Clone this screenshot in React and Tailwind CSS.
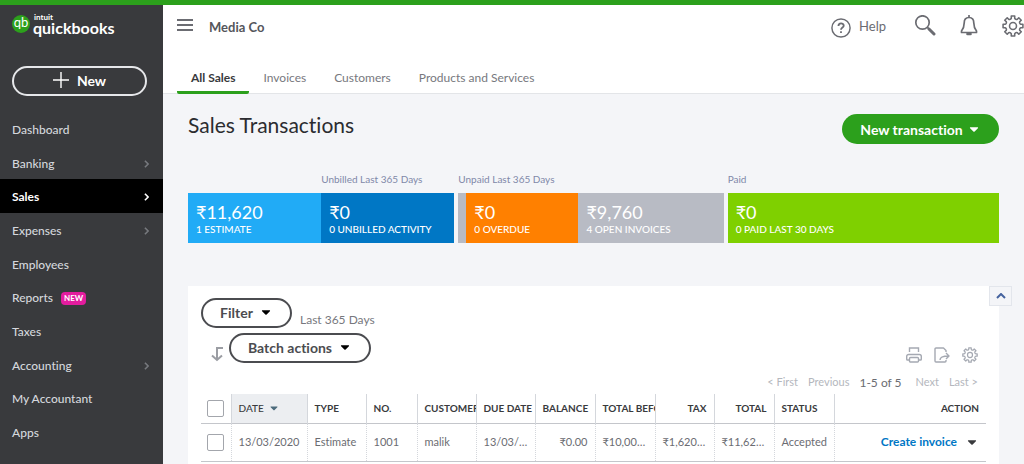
import { useState } from 'react';
import { FaCaretDown } from 'react-icons/fa';

const menuItems = [
  { name: 'Dashboard' },
  { name: 'Banking', arrow: true },
  { name: 'Sales', arrow: true },
  { name: 'Expenses', arrow: true },
  { name: 'Employees' },
  { name: 'Reports', badge: 'NEW' },
  { name: 'Taxes' },
  { name: 'Accounting', arrow: true },
  { name: 'My Accountant' },
  { name: 'Apps' },
];

const tabs = ['All Sales', 'Invoices', 'Customers', 'Products and Services'];

const moneyBar = [
  {
    width: 'flex-[266]',
    parts: [
      { amount: '₹11,620', label: '1 ESTIMATE', style: 'flex-1 bg-[#21abf6]' },
      { title: 'Unbilled Last 365 Days', amount: '₹0', label: '0 UNBILLED ACTIVITY', style: 'flex-1 bg-[#0077c5]' },
    ],
  },
  {
    width: 'flex-[265]',
    title: 'Unpaid Last 365 Days',
    parts: [
      { amount: '₹0', label: '0 OVERDUE', style: 'flex-[96] border-l-8 border-[#b8bbc4] bg-[#ff8000]' },
      { amount: '₹9,760', label: '4 OPEN INVOICES', style: 'flex-[129] bg-[#b8bbc4]' },
    ],
  },
  {
    width: 'flex-[271]',
    title: 'Paid',
    parts: [{ amount: '₹0', label: '0 PAID LAST 30 DAYS', style: 'flex-1 bg-[#7fd000]' }],
  },
];

const columns = [
  { name: 'TYPE', value: 'Estimate', width: 'w-[59px]' },
  { name: 'NO.', value: '1001', width: 'w-[51px]' },
  { name: 'CUSTOMER', value: 'malik', width: 'w-[59px]' },
  { name: 'DUE DATE', value: '13/03/2020', width: 'w-[59px]' },
  { name: 'BALANCE', value: '₹0.00', width: 'w-[60px]', right: true },
  { name: 'TOTAL BEFORE TAX', value: '₹10,000.00', width: 'w-[60px]' },
  { name: 'TAX', value: '₹1,620.00', width: 'w-[59px]', right: true },
  { name: 'TOTAL', value: '₹11,620.00', width: 'w-[60px]', right: true },
  { name: 'STATUS', value: 'Accepted', width: 'w-[60px]' },
];

function Chevron({ className }) {
  return (
    <svg viewBox="0 0 6 10" className={`h-2 w-[5px] ${className}`} fill="none" stroke="currentColor" strokeWidth="2">
      <path d="M1 1l4 4-4 4" />
    </svg>
  );
}

function Gear({ className, strokeWidth }) {
  const teeth = [0, 45, 90, 135, 180, 225, 270, 315];
  // one tooth and the notch next to it, for each eighth of the wheel
  const point = (radius, angle) => {
    const rad = (angle * Math.PI) / 180;
    return `${(12 + radius * Math.cos(rad)).toFixed(2)} ${(12 + radius * Math.sin(rad)).toFixed(2)}`;
  };
  const d = teeth
    .map((a, i) => `${i ? 'L' : 'M'}${point(11, a - 10)}L${point(11, a + 10)}L${point(8.8, a + 12)}A2.2 2.2 0 0 0 ${point(8.8, a + 33)}`)
    .join('');
  return (
    <svg viewBox="0 0 24 24" className={className} fill="none" stroke="currentColor" strokeWidth={strokeWidth} strokeLinejoin="round">
      <path d={`${d}Z`} />
      <circle cx="12" cy="12" r="3.8" />
    </svg>
  );
}

function Sidebar() {
  const [active, setActive] = useState('Sales');

  return (
    <aside className="w-[163px] shrink-0 bg-[#393a3d] text-[#d4d7dc]">
      <a href="#home" className="flex h-[38px] items-center gap-[3px] pl-3 text-white">
        <span className="flex h-[18px] w-[18px] justify-center rounded-full bg-[#2ca01c] text-[13px] leading-[15px]">qb</span>
        <span className="flex flex-col">
          <span className="pl-px text-[8px] leading-[7px] font-bold">intuit</span>
          <span className="text-[16px] leading-[13px] font-bold">quickbooks</span>
        </span>
      </a>
      <button className="mt-[23px] ml-3 flex h-[30px] w-[135px] items-center justify-center gap-2 rounded-full border-2 border-[#e6e7ea] pb-0.5 text-[14px] font-bold text-white">
        <svg viewBox="0 0 16 16" className="h-4 w-4" fill="none" stroke="currentColor" strokeWidth="1.4">
          <path d="M8 0v16M0 8h16" />
        </svg>
        New
      </button>
      <nav className="mt-4 grid h-[337px] auto-rows-fr">
        {menuItems.map((item) => (
          <a
            key={item.name}
            href={`#${item.name}`}
            onClick={() => setActive(item.name)}
            className={`flex items-center pt-0.5 pr-[14px] pl-3 text-[12px] ${
              active === item.name ? 'bg-black font-bold text-white' : 'font-medium'
            }`}
          >
            {item.name}
            {item.badge && (
              <span className="ml-2 rounded-sm bg-[#e31c9e] px-[3px] text-[8px] leading-[13px] font-bold text-white">{item.badge}</span>
            )}
            {item.arrow && <Chevron className={`ml-auto ${active === item.name ? '' : 'text-[#77797e]'}`} />}
          </a>
        ))}
      </nav>
    </aside>
  );
}

function Header() {
  const [activeTab, setActiveTab] = useState('All Sales');

  return (
    <header className="bg-white">
      <div className="flex h-[57px] items-start pl-[14px] text-[#6b6c72]">
        <button aria-label="Menu" className="mt-[14px]">
          <svg viewBox="0 0 16 12" className="h-3 w-4" stroke="currentColor" strokeWidth="2">
            <path d="M0 1h16M0 6h16M0 11h16" />
          </svg>
        </button>
        <span className="mt-3 ml-4 text-[13px] leading-5 font-bold text-[#55565b]">Media Co</span>
        <div className="ml-auto flex items-center pt-[9px]">
          <button className="flex items-center gap-2 pt-0.5 text-[13px]">
            <svg viewBox="0 0 22 22" className="mt-0.5 h-5 w-5" fill="none" stroke="currentColor" strokeWidth="1.6">
              <circle cx="11" cy="11" r="10" />
              <path d="M8.2 8.8c0-3.8 5.8-3.6 5.8-.3 0 2-3 2-3 4.4" strokeWidth="2" />
              <path d="M11 14.6v2" strokeWidth="2" />
            </svg>
            Help
          </button>
          <button aria-label="Search" className="ml-7">
            <svg viewBox="0 0 22 22" className="h-[22px] w-[22px]" fill="none" stroke="currentColor">
              <circle cx="8.5" cy="7.5" r="6.7" strokeWidth="1.7" />
              <path d="M13.2 12.2l1.500 1.500" strokeWidth="1.700" />
              <path d="M15 14l5 5" strokeWidth="3" strokeLinecap="round" />
            </svg>
          </button>
          <button aria-label="Notifications" className="ml-6">
            <svg viewBox="0 0 18 22" className="h-[22px] w-[18px]" fill="none" stroke="currentColor" strokeWidth="1.7" strokeLinejoin="round">
              <path d="M9 2.500C5.500 2.500 4.200 5 4.200 8c0 4-.7 5.500-2.700 8v1.500h15V16c-2-2.500-2.700-4-2.700-8 0-3-1.300-5.500-4.800-5.500z" />
              <path d="M9 0v2.500" />
              <path d="M7.500 19h3" strokeWidth="2.600" strokeLinecap="round" />
            </svg>
          </button>
          <button aria-label="Settings" className="ml-6">
            <Gear className="h-[22px] w-[22px]" strokeWidth="1.7" />
          </button>
        </div>
      </div>
      <nav className="flex border-b border-[#e3e5e8] pl-[14px]" role="tablist">
        {tabs.map((tab) => (
          <button
            key={tab}
            role="tab"
            aria-selected={activeTab === tab}
            onClick={() => setActiveTab(tab)}
            className={`-mb-px h-8 rounded-xs border-b-3 px-[14px] pt-0.5 text-[12px] ${
              activeTab === tab ? 'border-[#2ca01c] font-bold text-[#393a3d]' : 'border-transparent text-[#77787e]'
            }`}
          >
            {tab}
          </button>
        ))}
      </nav>
    </header>
  );
}

function MoneyBar() {
  return (
    <div className="mt-[27px] flex gap-1">
      {moneyBar.map((group) => (
        <div key={group.width} className={`min-w-0 ${group.width}`}>
          <div className="flex h-[22px] text-[10px] leading-4 text-[#8088a8]">
            {group.title || group.parts.map((part) => <span key={part.label} className="flex-1">{part.title}</span>)}
          </div>
          <div className="flex h-[50px] text-white">
            {group.parts.map((part) => (
              <button key={part.label} className={`min-w-0 px-2 pt-0.5 text-left ${part.style}`}>
                <span className="block text-[18px] leading-5">{part.amount}</span>
                <span className="block text-[10px] leading-[14px] font-medium whitespace-nowrap">{part.label}</span>
              </button>
            ))}
          </div>
        </div>
      ))}
    </div>
  );
}

function TableTools() {
  return (
    <div className="flex justify-end gap-3 text-[#a5a9b2]">
      <button aria-label="Print">
        <svg viewBox="0 0 16 16" className="h-4 w-4" fill="none" stroke="currentColor" strokeWidth="1.400">
          <path d="M3.500 5V1h9v4" />
          <path d="M3.500 13H1.500a.8.8 0 01-.8-.8V9.500a2 2 0 012-2h10.600a2 2 0 012 2v2.700a.8.8 0 01-.8.8h-2" />
          <path d="M4.500 10.500h7a1 1 0 011 1V14a1 1 0 01-1 1h-7a1 1 0 01-1-1v-2.500a1 1 0 011-1z" />
        </svg>
      </button>
      <button aria-label="Export">
        <svg viewBox="0 0 16 16" className="h-4 w-4" fill="none" stroke="currentColor" strokeWidth="1.400" strokeLinejoin="round">
          <path d="M12 5V3.500L9.500 1H2a1 1 0 00-1 1v12a1 1 0 001 1h9a1 1 0 001-1v-1" />
          <path d="M6 13c0-3 2.500-4 8.500-4M12 6l3 3-3 3" />
        </svg>
      </button>
      <button aria-label="Table settings">
        <Gear className="h-4 w-4" strokeWidth="1.800" />
      </button>
    </div>
  );
}

function TransactionsTable() {
  const [checked, setChecked] = useState(false);
  const cell = 'border-l border-[#d4d7dc] pl-[7px] overflow-hidden whitespace-nowrap';
  const checkbox = 'block h-[17px] w-[17px] appearance-none rounded-xs border border-[#a3a6ac] bg-white checked:bg-[#2ca01c]';

  return (
    <table className="w-full table-fixed border-collapse text-left text-[11px] text-[#6b6c72]">
      <thead>
        <tr className="h-[29px] border-b border-[#c4c6cb] text-[10px] text-[#393a3d]">
          <th className="w-[30px] pl-[6px]">
            <input type="checkbox" aria-label="Select all" checked={checked} onChange={(e) => setChecked(e.target.checked)} className={checkbox} />
          </th>
          <th className={`w-[76px] bg-[#eceef1] font-medium ${cell}`}>
            <button className="flex items-center gap-1">
              DATE <FaCaretDown className="h-3 w-3 text-[#4c6b7c]" />
            </button>
          </th>
          {columns.map((column) => (
            <th key={column.name} className={`${column.width} ${cell} font-bold ${column.right ? 'pr-[7px] text-right' : ''}`}>
              {column.name}
            </th>
          ))}
          <th className={`${cell} pr-[7px] text-right font-bold`}>ACTION</th>
        </tr>
      </thead>
      <tbody>
        <tr className="h-[38px] border-b border-[#c4c6cb]">
          <td className="pl-[6px]">
            <input type="checkbox" aria-label="Select Estimate 1001" checked={checked} onChange={(e) => setChecked(e.target.checked)} className={checkbox} />
          </td>
          <td className={`border-dotted ${cell}`}>13/03/2020</td>
          {columns.map((column) => (
            <td key={column.name} className={`border-dotted ${cell} text-ellipsis ${column.right ? 'pr-[7px] text-right' : 'pr-1'}`}>
              {column.value}
            </td>
          ))}
          <td className={`border-dotted ${cell} pr-[7px]`}>
            <div className="flex items-center justify-end gap-2 text-[12px]">
              <a href="#invoice" className="font-bold text-[#0077c5]">Create invoice</a>
              <button aria-label="More actions">
                <FaCaretDown className="h-[14px] w-[14px] text-[#393a3d]" />
              </button>
            </div>
          </td>
        </tr>
      </tbody>
    </table>
  );
}

export default function App() {
  const outlineButton = 'flex h-[30px] items-center justify-center gap-[6px] rounded-full border-2 border-[#4b4c50] bg-white pb-0.5 text-[14px] font-bold text-[#4b4c50]';

  return (
    <div className="flex min-h-screen flex-col bg-[#f4f5f8] font-['Lato','Noto_Sans',sans-serif] [font-variant-ligatures:none]">
      <div className="h-[5px] bg-[#2ca01c]" />
      <div className="flex flex-1">
        <Sidebar />
        <div className="flex min-w-0 flex-1 flex-col">
          <Header />
          <main className="flex flex-1 flex-col pr-[25px] pl-[25px]">
            <div className="mt-5 flex h-[30px] items-center justify-between">
              <h1 className="pb-2 text-[21px] leading-6 text-[#2b2c30]">Sales Transactions</h1>
              <button className="flex h-[30px] w-[157px] items-center justify-center gap-1 rounded-full bg-[#2ca01c] text-[14px] font-bold text-white">
                New transaction
                <FaCaretDown className="h-[14px] w-[14px]" />
              </button>
            </div>
            <MoneyBar />
            <section className="relative mt-[43px] flex-1 bg-white px-[13px] pt-3">
              <button aria-label="Collapse" className="absolute top-0 -right-[13px] flex h-5 w-[23px] items-center justify-center border border-[#e3e6ec] bg-[#f4f5f8]">
                <svg viewBox="0 0 10 6" className="h-[6px] w-[10px]" fill="none" stroke="#45639f" strokeWidth="2">
                  <path d="M1 5l4-4 4 4" />
                </svg>
              </button>
              <div className="flex items-center gap-2">
                <button className={`w-[91px] ${outlineButton}`}>
                  Filter <FaCaretDown className="h-[14px] w-[14px] text-black" />
                </button>
                <span className="pt-[14px] text-[12px] leading-4 text-[#77787e]">Last 365 Days</span>
              </div>
              <div className="mt-[5px] flex items-center gap-1 pl-2">
                <svg viewBox="0 0 14 16" className="mt-3 h-4 w-4 text-[#9b9da3]" fill="none" stroke="currentColor" strokeWidth="2">
                  <path d="M13 2H7v12M2 9.500L7 14l5-4.500" />
                </svg>
                <button className={`w-[142px] ${outlineButton}`}>
                  Batch actions <FaCaretDown className="h-[14px] w-[14px] text-black" />
                </button>
                <div className="ml-auto self-end pr-2">
                  <TableTools />
                </div>
              </div>
              <div className="mt-[11px] mb-[3px] flex h-[17px] items-center justify-end gap-[10px] pr-2 text-[11px] text-[#b4b7bd]">
                <button>&lt; First</button>
                <button>Previous</button>
                <span className="text-[12px] text-[#6b6c72]">1-5 of 5</span>
                <button className="ml-1">Next</button>
                <button>Last &gt;</button>
              </div>
              <TransactionsTable />
            </section>
          </main>
        </div>
      </div>
    </div>
  );
}
